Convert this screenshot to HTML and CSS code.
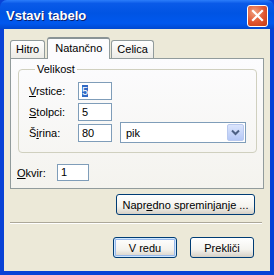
FILE: index.html
```html
<!DOCTYPE html>
<html lang="sl">
<head>
    <meta charset="UTF-8">
    <title>Vstavi tabelo</title>
    <link rel="stylesheet" href="styles.css">
</head>
<body>
    <div class="window">
        <div class="titlebar">
            <span class="title">Vstavi tabelo</span>
            <span class="close">
                <svg width="13" height="13" viewBox="0 0 13 13">
                    <path d="M2 2 L11 11 M11 2 L2 11" stroke="#fff" stroke-width="2.2" stroke-linecap="square"/>
                </svg>
            </span>
        </div>

        <div class="client">
            <!-- Pestanas -->
            <div class="tabs">
                <div class="tab">Hitro</div>
                <div class="tab active">Natančno</div>
                <div class="tab">Celica</div>
            </div>

            <div class="panel">
                <fieldset class="group">
                    <legend>Velikost</legend>
                    <div class="row">
                        <label class="label"><u>V</u>rstice:</label>
                        <span class="field"><span class="selected">5</span></span>
                    </div>
                    <div class="row">
                        <label class="label"><u>S</u>tolpci:</label>
                        <span class="field">5</span>
                    </div>
                    <div class="row">
                        <label class="label">Š<u>i</u>rina:</label>
                        <span class="field">80</span>
                        <span class="select">
                            <span class="select-text">pik</span>
                            <span class="drop">
                                <svg width="9" height="7" viewBox="0 0 9 7">
                                    <path d="M1 1.5 L4.5 5 L8 1.5" stroke="#4d6185" stroke-width="2" fill="none"/>
                                </svg>
                            </span>
                        </span>
                    </div>
                </fieldset>

                <div class="row okvir">
                    <label class="label"><u>O</u>kvir:</label>
                    <span class="field small">1</span>
                </div>
            </div>

            <div class="advanced">
                <button class="button wide">Napr<u>e</u>dno spreminjanje ...</button>
            </div>

            <div class="separator"></div>

            <div class="actions">
                <button class="button default">V redu</button>
                <button class="button">Prekliči</button>
            </div>
        </div>
    </div>
</body>
</html>
```

FILE: styles.css
```css
body {
    margin: 0;
    padding: 0;
    font-family: 'Liberation Sans', Arial, sans-serif;
    font-size: 11px;
    color: black;
    background: #ece9d8;
}

.window {
    width: 274px;
    height: 275px;
    box-sizing: border-box;
    display: flex;
    flex-direction: column;
    background: #0842d6;
    overflow: hidden;
}

/* Barra de titulo */
.titlebar {
    height: 29px;
    flex: none;
    display: flex;
    align-items: center;
    padding: 0 6px 0 6px;
    background: linear-gradient(#2b7dfa 0%, #0a5ae8 12%, #0054e3 45%, #0058ee 80%, #0048d0 100%);
    border-radius: 7px 7px 0 0;
}

.title {
    flex: 1;
    color: white;
    font-weight: bold;
    font-size: 13px;
    text-shadow: 1px 1px 0 #0a1e6e;
    padding-top: 1px;
}

.close {
    width: 19px;
    height: 20px;
    margin-top: 2px;
    display: flex;
    align-items: center;
    justify-content: center;
    border: 1px solid white;
    border-radius: 3px;
    background: radial-gradient(circle at 35% 30%, #f0a080 0%, #e0542e 55%, #c23c16 100%);
}

.client {
    flex: 1;
    margin: 0 4px 4px 4px;
    background: #ece9d8;
    padding: 8px 6px 0 6px;
    display: flex;
    flex-direction: column;
}

/* Pestanas */
.tabs {
    display: flex;
    align-items: flex-end;
    height: 21px;
    position: relative;
    z-index: 1;
}

.tab {
    height: 17px;
    padding: 0 5px;
    line-height: 17px;
    border: 1px solid #919b9c;
    border-bottom: none;
    border-radius: 3px 3px 0 0;
    background: linear-gradient(#ffffff, #ecebe6);
    margin-bottom: 0;
}

.tab + .tab {
    margin-left: 1px;
}

.tab.active {
    height: 20px;
    line-height: 19px;
    padding: 0 7px;
    background: #fcfcfe;
    margin-left: 2px;
    margin-bottom: -1px;
    border-top: 2px solid #8a9395;
}

.panel {
    width: 254px;
    height: 131px;
    box-sizing: border-box;
    border: 1px solid #919b9c;
    background: linear-gradient(#fcfcfe, #f4f3ee);
    padding: 4px 8px 0 6px;
}

.group {
    margin: 0;
    padding: 5px 10px 9px 10px;
    border: 1px solid #d0d0bf;
    border-radius: 4px;
    margin-left: 1px;
}

.group legend {
    padding: 0 2px;
    margin-left: 6px;
    color: #000;
}

.row {
    display: flex;
    align-items: center;
    height: 21px;
}

.label {
    width: 49px;
    flex: none;
}

.field {
    width: 34px;
    height: 18px;
    box-sizing: border-box;
    border: 1px solid #7f9db9;
    background: white;
    padding: 1px 3px;
    line-height: 14px;
}

.field.small {
    width: 32px;
    height: 17px;
    line-height: 13px;
}

.selected {
    background: #316ac5;
    color: white;
}

.select {
    width: 126px;
    height: 21px;
    box-sizing: border-box;
    margin-left: 8px;
    border: 1px solid #7f9db9;
    background: white;
    display: flex;
    align-items: center;
    padding: 1px;
}

.select-text {
    flex: 1;
    padding-left: 4px;
}

.drop {
    width: 17px;
    height: 17px;
    box-sizing: border-box;
    border: 1px solid #b9c9ef;
    border-radius: 2px;
    background: linear-gradient(#dbe5fc, #b5c8f7);
    display: flex;
    align-items: center;
    justify-content: center;
}

.okvir {
    margin-top: 9px;
    margin-left: 0;
}

.okvir .label {
    width: 40px;
}

/* Botones */
.button {
    font-family: 'Liberation Sans', Arial, sans-serif;
    font-size: 11px;
    height: 21px;
    width: 64px;
    padding: 0;
    border: 1px solid #003c74;
    border-radius: 3px;
    background: linear-gradient(#ffffff 0%, #f4f3ee 60%, #d6d0c5 100%);
    color: black;
}

.button.wide {
    width: 139px;
}

.button.default {
    box-shadow: inset 0 0 0 1px #cee7ff, inset 0 0 0 2px #98b8ea;
}

.advanced {
    display: flex;
    justify-content: flex-end;
    margin-top: 5px;
    padding-right: 9px;
}

.separator {
    height: 0;
    margin: 7px 2px 0 0;
    border-top: 1px solid #aca899;
    border-bottom: 1px solid #ffffff;
}

.actions {
    display: flex;
    justify-content: flex-end;
    gap: 13px;
    margin-top: 13px;
    padding-right: 10px;
}
```
